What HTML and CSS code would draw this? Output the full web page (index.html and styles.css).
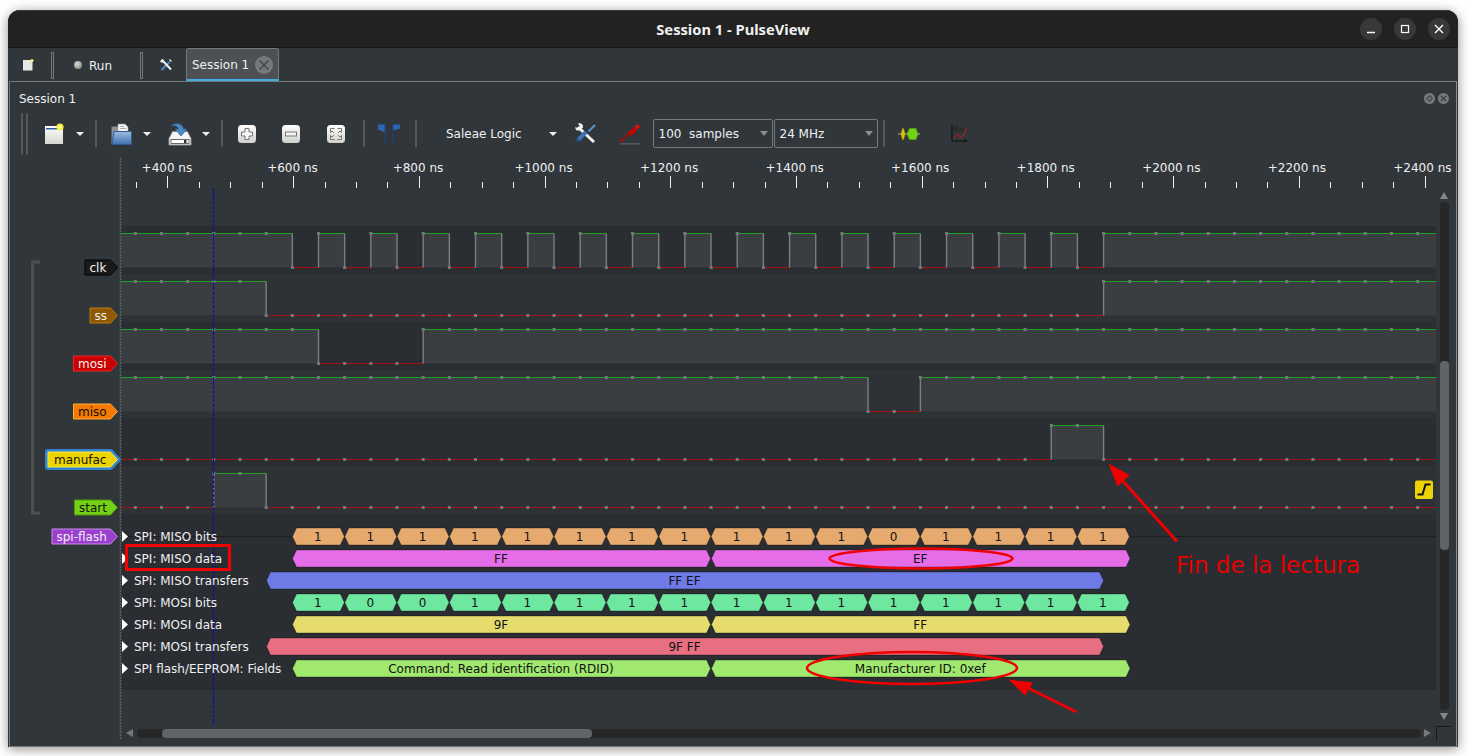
FILE: index.html
```html
<!DOCTYPE html>
<html>
<head>
    <title>Session 1 - PulseView</title>
    <link rel="stylesheet" href="styles.css">
</head>
<body>
    <div class="window">
        <header class="titlebar">
            <span class="title">Session 1 - PulseView</span>
            <div class="win-buttons">
                <span class="win-btn"><svg width="12" height="12" viewBox="0 0 12 12"><path d="M2 9.5h8" stroke="#fff" stroke-width="1.3"/></svg></span>
                <span class="win-btn"><svg width="12" height="12" viewBox="0 0 12 12"><rect x="2.5" y="2.5" width="7" height="7" fill="none" stroke="#fff" stroke-width="1.2"/></svg></span>
                <span class="win-btn"><svg width="12" height="12" viewBox="0 0 12 12"><path d="M2 2l8 8M10 2l-8 8" stroke="#fff" stroke-width="1.4"/></svg></span>
            </div>
        </header>

        <div class="tabbar">
            <span class="tab-icon tab-stop">
                <svg width="12" height="14" viewBox="0 0 12 14"><rect x="1" y="2" width="9.5" height="10.5" fill="#e8e8e6"/><circle cx="10" cy="2.5" r="1.6" fill="#f6ee6a"/></svg>
            </span>
            <span class="tab-sep"></span>
            <span class="run-btn"><span class="run-led"></span><span class="run-text">Run</span></span>
            <span class="tab-sep"></span>
            <span class="tab-icon tab-tools">
                <svg width="14" height="14" viewBox="0 0 14 14">
                    <path d="M2.5 12l8-8" stroke="#4f86c6" stroke-width="2.2"/>
                    <path d="M3 2l9 9.5" stroke="#eee" stroke-width="2"/>
                    <path d="M1 3.5l2-2.5 2 1-2 3z M10.5 1l2.5 2-1 1-2-2z" fill="#eee"/>
                </svg>
            </span>
            <div class="session-tab">
                <span>Session 1</span>
                <span class="tab-close"><svg width="18" height="18" viewBox="0 0 18 18"><circle cx="9" cy="9" r="9" fill="#76797c"/><path d="M4.5 4.5l9 9M13.5 4.5l-9 9" stroke="#43464a" stroke-width="1.5"/></svg></span>
            </div>
        </div>

        <section class="session">
            <div class="dock-title">
                <span>Session 1</span>
                <div class="dock-buttons">
                    <svg width="11" height="11" viewBox="0 0 11 11"><circle cx="5.5" cy="5.5" r="5.5" fill="#76797c"/><rect x="3.5" y="3.5" width="4" height="4" fill="none" stroke="#3a3e42" transform="rotate(45 5.5 5.5)"/></svg>
                    <svg width="11" height="11" viewBox="0 0 11 11"><circle cx="5.5" cy="5.5" r="5.5" fill="#76797c"/><path d="M3 3l5 5M8 3l-5 5" stroke="#3a3e42" stroke-width="1.2"/></svg>
                </div>
            </div>

            <div class="toolbar">
                <span class="handle"></span>
                <button class="tb-btn first">
                    <svg width="22" height="22" viewBox="0 0 22 22">
                        <defs><linearGradient id="paper" x1="0" y1="0" x2="0" y2="1"><stop offset="0" stop-color="#ffffff"/><stop offset="1" stop-color="#d5d5d2"/></linearGradient></defs>
                        <rect x="2" y="3" width="18" height="18" fill="url(#paper)"/>
                        <rect x="3" y="5" width="13" height="1.5" fill="#2c5c9c"/>
                        <circle cx="17" cy="4" r="3.6" fill="#f4ee3a"/>
                        <circle cx="17" cy="4" r="1.8" fill="#fff9a0"/>
                    </svg>
                </button>
                <span class="tb-arrow"></span>
                <span class="tb-sep"></span>
                <button class="tb-btn">
                    <svg width="22" height="22" viewBox="0 0 22 22">
                        <defs><linearGradient id="folder" x1="0" y1="0" x2="0" y2="1"><stop offset="0" stop-color="#9cbde3"/><stop offset="1" stop-color="#3f70ad"/></linearGradient></defs>
                        <path d="M1.5 3.5h8v3h8v14h-16z" fill="#8d9094" stroke="#5c5f63"/>
                        <path d="M8 1h7l3 3v6H8z" fill="#f2f2f0" stroke="#9a9a98" stroke-width=".6"/>
                        <path d="M10 3.5h4M10 5.5h6" stroke="#999" stroke-width=".8"/>
                        <path d="M4 8.5h17.5v13H2z" fill="url(#folder)" stroke="#2e5a94"/>
                    </svg>
                </button>
                <span class="tb-arrow"></span>
                <button class="tb-btn next">
                    <svg width="24" height="24" viewBox="0 0 24 24">
                        <path d="M4.500 9.500h15l3.500 7v6.500H1v-6.500z" fill="#f6f6f4" stroke="#8b8d8e"/>
                        <rect x="3" y="17.500" width="18" height="4" fill="#fff" stroke="#444" stroke-width=".8"/>
                        <rect x="16" y="18" width="2.500" height="3" fill="#333"/>
                        <path d="M3 3.500C8 .5 14.500 1 15.500 7H19l-6 7-6-7h3.500C10 4.500 7 3 3 3.500z" fill="#4a8ac2" stroke="#2c6296" stroke-width=".7"/>
                    </svg>
                </button>
                <span class="tb-arrow"></span>
                <span class="tb-sep"></span>
                <button class="tb-btn">
                    <svg width="18" height="18" viewBox="0 0 18 18">
                        <defs><linearGradient id="lens" x1="0" y1="0" x2="0" y2="1"><stop offset="0" stop-color="#ffffff"/><stop offset="1" stop-color="#cfcfcc"/></linearGradient></defs>
                        <rect width="18" height="18" rx="3.500" fill="url(#lens)"/>
                        <path d="M7 3.500h4V7h3.500v4H11v3.500H7V11H3.500V7H7z" fill="#f6f6f6" stroke="#777" stroke-width="1"/>
                    </svg>
                </button>
                <button class="tb-btn">
                    <svg width="18" height="18" viewBox="0 0 18 18">
                        <rect width="18" height="18" rx="3.500" fill="url(#lens)"/>
                        <rect x="3.500" y="7" width="11" height="4" fill="#f6f6f6" stroke="#777"/>
                    </svg>
                </button>
                <button class="tb-btn fit">
                    <svg width="18" height="18" viewBox="0 0 18 18">
                        <rect width="18" height="18" rx="3.500" fill="url(#lens)"/>
                        <path d="M7.500 3.500h-4v4l1.500-1.500 2 2M10.500 3.500h4v4l-1.500-1.500-2 2M7.500 14.500h-4v-4l1.500 1.500 2-2M10.500 14.500h4v-4l-1.500 1.500-2-2" fill="none" stroke="#777"/>
                    </svg>
                </button>
                <span class="tb-sep tight"></span>
                <button class="tb-btn">
                    <svg width="22" height="20" viewBox="0 0 22 20">
                        <path d="M7 0.500H0v5l5.500 2.500H7zM15 0.500h7v4L16.500 6H15z" fill="#2f66b0"/>
                        <path d="M7.300 0v19.500M14.700 0v19.500" stroke="#1d4278" stroke-width="1.300"/>
                    </svg>
                </button>
                <span class="tb-sep tightest"></span>
                <span class="tb-label">Saleae Logic</span>
                <span class="tb-arrow device"></span>
                <button class="tb-btn tools">
                    <svg width="22" height="22" viewBox="0 0 22 22">
                        <path d="M3 4l16 15" stroke="#f2f2f2" stroke-width="3"/>
                        <path d="M0.500 4l3 1.500L5 3.500 3 0.500c3-1 5.500 1 5 4l-3.500 3C1.500 8 0 6.500 0.500 4z" fill="#f2f2f2"/>
                        <path d="M13.500 8.500L20 2" stroke="#5b93d2" stroke-width="2"/>
                        <path d="M11 9L3.500 16.500" stroke="#3d72b4" stroke-width="4"/>
                        <path d="M3.500 16.500L2 18" stroke="#244c80" stroke-width="4"/>
                    </svg>
                </button>
                <button class="tb-btn tools">
                    <svg width="22" height="22" viewBox="0 0 22 22">
                        <path d="M1 19L10 10" stroke="#c00000" stroke-width="1.500"/>
                        <path d="M9 9.500L15 4l3 3-5.500 6z" fill="#cc0000"/>
                        <path d="M15.500 3.500L18.500 1l2.500 2.500-3 3z" fill="#e01010"/>
                        <rect x="1" y="20" width="20" height="1.600" fill="#55585a"/>
                    </svg>
                </button>
                <div class="combo samples"><span>100&nbsp; samples</span><i></i></div>
                <div class="combo rate"><span>24 MHz</span><i></i></div>
                <span class="tb-sep thin"></span>
                <button class="tb-btn tools">
                    <svg width="24" height="14" viewBox="0 0 24 14">
                        <path d="M1 7h22" stroke="#b5b5b0" stroke-width="1"/>
                        <path d="M4 7l1.500-5.500h1L8 7l-1.500 5.500h-1z" fill="#e3c400" stroke="#b89e00" stroke-width=".6"/>
                        <path d="M10 7l2.500-5.500h6.500L21 7l-2 5.500h-6.500z" fill="#73d216" stroke="#5aa80f" stroke-width=".6"/>
                    </svg>
                </button>
                <button class="tb-btn next">
                    <svg width="18" height="18" viewBox="0 0 18 18">
                        <path d="M2 0v16h15" fill="none" stroke="#111" stroke-width="1.200"/>
                        <path d="M14.500 14l3 2-3 2z" fill="#111"/>
                        <path d="M3 14.500C6 9 8 9 9 11c2 2 4 1 5.500-3 .5-2 1-3 1.500-5" fill="none" stroke="#a32020" stroke-width="1.200"/>
                        <text x="4" y="6" class="math-label">f(x)</text>
                    </svg>
                </button>
            </div>

            <div class="view">
                <svg id="trace" class="trace" viewBox="10 157 1429 570" width="1429" height="570"></svg>
                <div class="vscroll">
                    <span class="sb-arrow up"></span>
                    <div class="vtrack"><div class="vhandle"></div></div>
                    <span class="sb-arrow down"></span>
                </div>
            </div>
            <div class="hscroll">
                <span class="sb-arrow left"></span>
                <div class="htrack"><div class="hhandle"></div></div>
                <span class="sb-arrow right"></span>
                <span class="corner"></span>
            </div>
        </section>
    </div>

    <svg class="notes" width="1468" height="756" viewBox="0 0 1468 756">
        <rect x="126.500" y="545.500" width="103" height="24" fill="none" stroke="#f00000" stroke-width="3"/>
        <ellipse cx="921" cy="558.500" rx="91.500" ry="10" fill="none" stroke="#f00000" stroke-width="2.500"/>
        <ellipse cx="912" cy="668" rx="105" ry="16" fill="none" stroke="#f00000" stroke-width="2.500"/>
        <path d="M1177 541.500L1122 480" stroke="#f00000" stroke-width="3"/>
        <path d="M1108.500 463.500L1129.500 475L1117.500 486.500z" fill="#f00000"/>
        <path d="M1076.500 712L1028 688" stroke="#f00000" stroke-width="3"/>
        <path d="M1008.500 679.500L1033 682.500L1025 695.500z" fill="#f00000"/>
        <text x="1176" y="573" class="note-text">Fin de la lectura</text>
    </svg>

    <script src="script.js"></script>
</body>
</html>
```

FILE: styles.css
```css
* {
    box-sizing: border-box;
}

body {
    margin: 0;
    height: 756px;
    overflow: hidden;
    background: #fff;
    font-family: "DejaVu Sans", sans-serif;
    font-size: 12px;
    color: #eff0f1;
}

.window {
    margin: 10px 0 0 8px;
    width: 1450px;
    height: 737px;
    background: #31363b;
    border-radius: 12px 12px 0 0;
    box-shadow: 0 2px 12px rgba(0, 0, 0, 0.45);
    display: flex;
    flex-direction: column;
    overflow: hidden;
}

.titlebar {
    height: 38px;
    flex: none;
    background: #222;
    border-top: 1px solid #3a3a3a;
    border-bottom: 1px solid #191919;
    display: flex;
    align-items: center;
    justify-content: center;
    position: relative;
}

.title {
    font-family: "Noto Sans", sans-serif;
    font-weight: 700;
    font-size: 14.700px;
    color: #f0f0f0;
}

.win-buttons {
    position: absolute;
    right: 8px;
    top: 7px;
    display: flex;
    gap: 12px;
}

.win-btn {
    width: 22px;
    height: 22px;
    border-radius: 50%;
    background: #383838;
    display: flex;
    align-items: center;
    justify-content: center;
}

.tabbar {
    height: 33px;
    flex: none;
    display: flex;
    align-items: center;
    padding-left: 14px;
}

.tab-icon {
    display: flex;
}

.tab-sep {
    width: 3px;
    height: 27px;
    border: 1px solid #76797c;
    margin-top: 1px;
}

.tab-stop {
    margin-right: 17px;
}

.run-btn {
    width: 86px;
    display: flex;
    align-items: center;
    padding-left: 20px;
}

.run-led {
    width: 8px;
    height: 8px;
    border-radius: 50%;
    background: radial-gradient(circle at 40% 35%, #d8d8d0, #77776f);
    margin-right: 7px;
    margin-top: 1px;
}

.run-text {
    padding-top: 2px;
}

.tab-tools {
    margin-left: 16px;
    margin-right: 13px;
    margin-top: 1px;
}

.session-tab {
    width: 93px;
    height: 33px;
    background: #4d5054;
    border: 1px solid #76797c;
    border-bottom: 2px solid #3daee9;
    border-radius: 3px 3px 0 0;
    padding: 2px 5px 0 5px;
    display: flex;
    align-items: center;
    justify-content: space-between;
}

.tab-close {
    display: flex;
}

.session {
    flex: 1;
    margin-left: 1px;
    margin-right: 1px;
    border: 1px solid #76797c;
    border-right-color: #8a8d90;
    display: flex;
    flex-direction: column;
}

.dock-title {
    height: 29px;
    flex: none;
    padding: 10px 7px 0 9px;
    line-height: 15px;
    display: flex;
    justify-content: space-between;
}

.dock-buttons {
    display: flex;
    gap: 3px;
    align-items: flex-start;
    margin-top: 1px;
}

.toolbar {
    height: 45px;
    flex: none;
    display: flex;
    align-items: center;
    padding-left: 11px;
}

.handle {
    width: 7px;
    height: 42px;
    border-left: 2.500px solid #54575b;
    border-right: 2.500px solid #54575b;
}

.tb-btn {
    width: 44px;
    height: 30px;
    padding: 0;
    border: none;
    background: none;
    display: flex;
    align-items: center;
    justify-content: center;
}

.tb-btn.first {
    margin-left: 4px;
}

.tb-btn.next {
    margin-left: 6px;
}

.tb-btn.fit {
    padding-left: 2px;
}

.tb-arrow {
    width: 9px;
    height: 4px;
    position: relative;
    flex: none;
}

.tb-arrow::after,
.combo i {
    content: "";
    display: block;
    width: 0;
    height: 0;
    border-left: 4px solid transparent;
    border-right: 4px solid transparent;
    border-top: 4px solid #eff0f1;
}

.tb-arrow.device {
    margin-left: 25px;
    margin-right: 6px;
}

.tb-sep {
    width: 2px;
    height: 27px;
    background: #54575b;
    margin: 0 2px 0 10px;
    flex: none;
}

.tb-sep.tight {
    margin-left: 6px;
}

.tb-sep.tightest {
    margin-left: 4px;
    margin-right: 0;
}

.tb-sep.thin {
    margin-left: 5px;
}

.tb-label {
    margin-left: 29px;
    width: 78px;
    white-space: nowrap;
}

.combo {
    height: 29px;
    border: 1px solid #76797c;
    border-radius: 2px;
    display: flex;
    align-items: center;
    justify-content: space-between;
    padding: 0 4px 0 5px;
    flex: none;
}

.combo i {
    border-top-color: #8a8d90;
    border-top-width: 5px;
}

.combo.samples {
    width: 120px;
    margin-left: 0.500px;
}

.combo.rate {
    width: 104px;
    margin-left: 1px;
}

.view {
    height: 570px;
    margin-top: 1px;
    flex: none;
    display: flex;
}

.trace {
    display: block;
    flex: none;
    overflow: visible;
}

.trace text {
    font-family: "DejaVu Sans", sans-serif;
    font-size: 12px;
    fill: #eff0f1;
}

.trace text.dark {
    fill: #111;
}

.vscroll {
    width: 10px;
    margin-top: 35px;
    display: flex;
    flex-direction: column;
    align-items: center;
    height: 532px;
}

.vtrack {
    width: 9px;
    height: 508px;
    margin: 3px 0;
    border-radius: 4px;
    background: #272727;
    padding-top: 159px;
}

.vhandle {
    height: 189px;
    border-radius: 4px;
    background: #616366;
}

.sb-arrow {
    width: 0;
    height: 0;
    flex: none;
    border: 0 solid transparent;
}

.sb-arrow.up {
    border-left-width: 4.500px;
    border-right-width: 4.500px;
    border-bottom: 7px solid #85888b;
}

.sb-arrow.down {
    border-left-width: 4.500px;
    border-right-width: 4.500px;
    border-top: 7px solid #85888b;
}

.sb-arrow.left {
    border-top-width: 4.500px;
    border-bottom-width: 4.500px;
    border-right: 7px solid #76797c;
}

.sb-arrow.right {
    border-top-width: 4.500px;
    border-bottom-width: 4.500px;
    border-left: 7px solid #76797c;
}

.hscroll {
    flex: 1;
    display: flex;
    align-items: flex-start;
    padding-left: 116px;
    padding-top: 2px;
}

.htrack {
    width: 1284px;
    height: 9px;
    margin: 0 3px 0 4px;
    border-radius: 4px;
    background: #272727;
    padding-left: 25px;
}

.hhandle {
    width: 430px;
    height: 9px;
    border-radius: 4px;
    background: #616366;
}

.corner {
    width: 15px;
    height: 15px;
    margin-left: 5px;
    margin-top: -3px;
    border-top: 1px solid #16181a;
    border-left: 1px solid #16181a;
}

.math-label {
    font-family: "DejaVu Sans", sans-serif;
    font-size: 6px;
    fill: #111;
}

.notes {
    position: absolute;
    left: 0;
    top: 0;
    pointer-events: none;
}

.note-text {
    font-family: "DejaVu Sans", sans-serif;
    font-size: 23px;
    fill: #e80000;
}
```

FILE: script.js
```js
const svg = document.getElementById('trace');
let out = '';

const rect = (x, y, w, h, fill) => {
    out += `<rect x="${x}" y="${y}" width="${w}" height="${h}" fill="${fill}"/>`;
};
const line = (x1, y1, x2, y2, color, width = 1) => {
    out += `<line x1="${x1}" y1="${y1}" x2="${x2}" y2="${y2}" stroke="${color}" stroke-width="${width}"/>`;
};
const text = (x, y, str, cls = '', anchor = 'start') => {
    out += `<text x="${x}" y="${y}" class="${cls}" text-anchor="${anchor}">${str}</text>`;
};

// ruler
for (let i = 0; i <= 41; i++) {
    const x = Math.round(136 + 31.43 * i) + 0.5;
    const major = (i + 3) % 4 === 0;
    line(x, major ? 176 : 182, x, 188, '#eff0f1');
}
for (let i = 0; i <= 10; i++) {
    const x = 166.9 + 125.55 * i;
    text(x, 172, `+${400 + i * 200} ns`, '', 'middle');
}

// backgrounds of the rows
const LEFT = 121, RIGHT = 1436;
[226, 274, 322, 370, 418, 466].forEach((y, i) => {
    rect(LEFT, y, RIGHT - LEFT, 48, i % 2 ? '#2e3236' : '#2a2d31');
});
rect(LEFT, 514, RIGHT - LEFT, 176, '#2a2d31');

// logic channels: start level, then the samples where the level flips
const clkEdges = [6];
for (let k = 7; k <= 37; k++) clkEdges.push(k);

const channels = [
    { top: 233, start: 1, edges: clkEdges },
    { top: 281, start: 1, edges: [5, 37] },
    { top: 329, start: 1, edges: [7, 11] },
    { top: 377, start: 1, edges: [28, 30] },
    { top: 425, start: 0, edges: [35, 37] },
    { top: 473, start: 0, edges: [3, 5] }
];
const sampleX = k => 135.3 + 26.17 * k;
const HIGH = '#1da31d', LOW = '#a81010', EDGE = '#7c7f82', DOT = '#74777a';

channels.forEach(ch => {
    const hi = ch.top + 0.5, lo = ch.top + 34.5;
    const cuts = [LEFT, ...ch.edges.map(sampleX), RIGHT];
    let level = ch.start;
    for (let i = 0; i < cuts.length - 1; i++) {
        if (level) rect(cuts[i], hi, cuts[i + 1] - cuts[i], 34, '#3a3e41');
        line(cuts[i], level ? hi : lo, cuts[i + 1], level ? hi : lo, level ? HIGH : LOW);
        if (i > 0) line(cuts[i], hi, cuts[i], lo, EDGE, 1.4);
        level = 1 - level;
    }
    for (let k = 0; k <= 49; k++) {
        const flips = ch.edges.filter(e => e <= k).length;
        const on = flips % 2 ? 1 - ch.start : ch.start;
        rect(sampleX(k) - 1.5, (on ? hi : lo) - 1.5, 3, 3, DOT);
    }
});

// annotation rows
const rows = ['SPI: MISO bits', 'SPI: MISO data', 'SPI: MISO transfers', 'SPI: MOSI bits',
    'SPI: MOSI data', 'SPI: MOSI transfers', 'SPI flash/EEPROM: Fields'];
const rowY = i => 536.5 + 22 * i;

line(LEFT, 536.5, RIGHT, 536.5, '#1c1e20');

const hex = (x0, x1, c, fill, label) => {
    const t = 8.5;
    const pts = [[x0, c], [x0 + 4, c - t], [x1 - 4, c - t], [x1, c], [x1 - 4, c + t], [x0 + 4, c + t]];
    out += `<polygon points="${pts.join(' ')}" fill="${fill}" stroke="#000" stroke-opacity=".3"/>`;
    text((x0 + x1) / 2 - 0.5, c + 4.5, label, 'dark', 'middle');
};
const bits = (row, list, fill) => {
    list.split('').forEach((b, i) => {
        hex(292.5 + 52.33 * i, 292.5 + 52.33 * (i + 1) - 0.5, rowY(row), fill, b);
    });
};

bits(0, '1111111111101111', '#e6aa6e');
hex(292.5, 710.5, rowY(1), '#e66de8', 'FF');
hex(711.5, 1130, rowY(1), '#e66de8', 'EF');
hex(266.5, 1103.5, rowY(2), '#6e7ae6', 'FF EF');
bits(3, '1001111111111111', '#6ee8a0');
hex(292.5, 710.5, rowY(4), '#e6dc6e', '9F');
hex(711.5, 1130, rowY(4), '#e6dc6e', 'FF');
hex(266.5, 1103.5, rowY(5), '#e86e82', '9F FF');
hex(292.5, 710.5, rowY(6), '#a0e86e', 'Command: Read identification (RDID)');
hex(711.5, 1130, rowY(6), '#a0e86e', 'Manufacturer ID: 0xef');

// left edge of the viewport, cursor and the row titles
line(120.5, 157, 120.5, 740, '#5c6064', 1.5);
out += `<line x1="120.5" y1="157" x2="120.5" y2="740" stroke="#31363b" stroke-width="2" stroke-dasharray="1 2"/>`;
out += `<line x1="213.5" y1="188" x2="213.5" y2="725" stroke="#10109c" stroke-width="1.4" stroke-dasharray="3 1.5"/>`;

rows.forEach((name, i) => {
    const c = rowY(i);
    out += `<path d="M122 ${c - 5.5}l6 5.500-6 5.500z" fill="#fff"/>`;
    text(134, c + 4.5, name);
});

// group bracket
out += `<path d="M40 262H32.500V513H40" fill="none" stroke="#4d504d" stroke-width="3"/>`;

// channel flags
const flags = [
    { name: 'clk', x: 85, c: 267.5, fill: '#1a1a1a', border: '#000', dark: false },
    { name: 'ss', x: 90, c: 315.5, fill: '#8f5902', border: '#c17d11', dark: false },
    { name: 'mosi', x: 73.5, c: 363.5, fill: '#cc0000', border: '#ef2929', dark: false },
    { name: 'miso', x: 73.5, c: 411.5, fill: '#f57900', border: '#fcaf3e', dark: true },
    { name: 'manufac', x: 48, c: 459.5, fill: '#edd400', border: '#fce94f', dark: true, selected: true },
    { name: 'start', x: 74.5, c: 507.5, fill: '#73d216', border: '#4e9a06', dark: true },
    { name: 'spi-flash', x: 52, c: 536.5, fill: '#9b3fcf', border: '#c98bea', dark: false }
];
flags.forEach(f => {
    const t = 7.5, tip = 117.5;
    const shape = `${f.x},${f.c - t} ${tip - 7},${f.c - t} ${tip},${f.c} ${tip - 7},${f.c + t} ${f.x},${f.c + t}`;
    if (f.selected) {
        out += `<polygon points="${shape}" fill="none" stroke="#3283d3" stroke-width="6" stroke-linejoin="round"/>`;
    }
    out += `<polygon points="${shape}" fill="${f.fill}" stroke="${f.border}"/>`;
    text(f.x + (f.selected ? 6 : 4.5), f.c + 4, f.name, f.dark ? 'dark' : '');
});

// trigger marker
out += `<rect x="1415" y="480.500" width="18" height="18.500" rx="2" fill="#edd400"/>`;
out += `<path d="M1417.500 494.500H1422.500L1425.500 484.500H1430.500" fill="none" stroke="#111" stroke-width="2"/>`;

svg.innerHTML = out;
```
